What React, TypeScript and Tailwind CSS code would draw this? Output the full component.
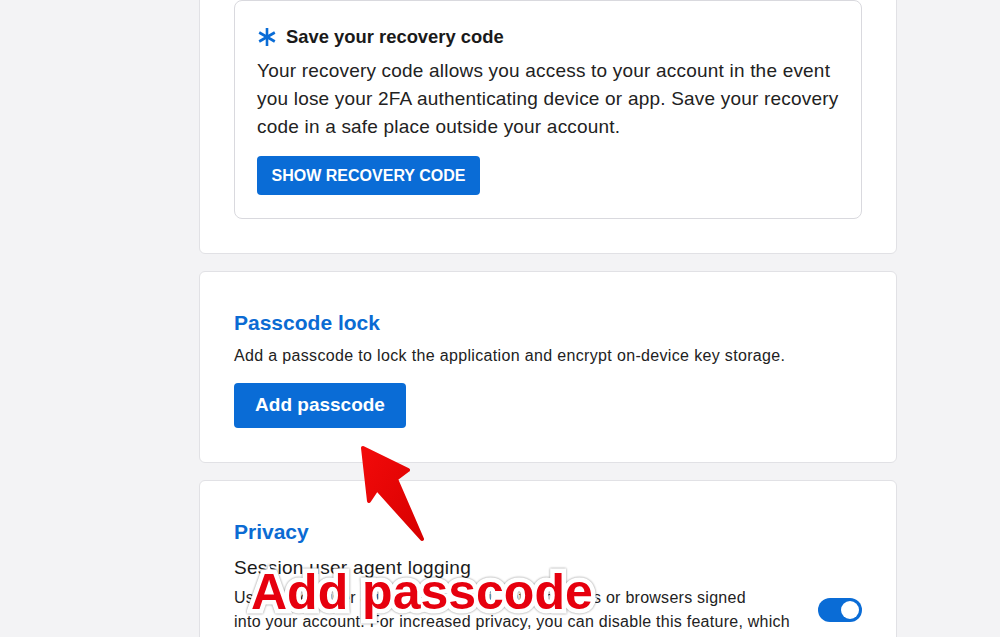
import React from "react";

function AsteriskIcon() {
  return (
    <svg width="20" height="20" viewBox="0 0 20 20" className="shrink-0">
      <g stroke="#0a6cd6" strokeWidth="2.6" strokeLinecap="butt">
        <line x1="10" y1="1" x2="10" y2="19" />
        <line x1="2.2" y1="5.5" x2="17.8" y2="14.5" />
        <line x1="2.2" y1="14.5" x2="17.8" y2="5.5" />
      </g>
    </svg>
  );
}

function Toggle() {
  return (
    <div className="mt-[43px] flex h-[24px] w-[44px] shrink-0 items-center justify-end rounded-full bg-[#0a6cd6] px-[3px]">
      <div className="h-[18px] w-[18px] rounded-full bg-white" />
    </div>
  );
}

export default function App() {
  return (
    <div className="relative h-[637px] w-[1000px] overflow-hidden bg-[#f3f3f5] font-['Segoe_UI','Liberation_Sans',sans-serif] text-[#1c1c1c]">
      <div className="-mt-[35px] ml-[199px] flex w-[698px] flex-col gap-[17px]">
        <section className="rounded-[6px] border border-[#e1e1e5] bg-white p-[34px]">
          <div className="rounded-[8px] border border-[#d9d9de] px-[22px] pb-[23px] pt-[22px]">
            <div className="flex h-[28px] items-center gap-[9px]">
              <AsteriskIcon />
              <h3 className="text-[18.4px] font-bold leading-[28px] text-[#1a1a1a]">
                Save your recovery code
              </h3>
            </div>
            <p className="mt-[6px] whitespace-nowrap text-[19px] leading-[28px] tracking-[0.2px] text-[#222]">
              Your recovery code allows you access to your account in the event
              <br />
              you lose your 2FA authenticating device or app. Save your recovery
              <br />
              code in a safe place outside your account.
            </p>
            <button className="mt-[15px] flex h-[39px] w-[223px] items-center justify-center rounded-[4px] bg-[#0a6cd6] text-[16px] font-bold text-white">
              SHOW RECOVERY CODE
            </button>
          </div>
        </section>

        <section className="rounded-[6px] border border-[#e1e1e5] bg-white p-[34px]">
          <h2 className="text-[21px] font-bold leading-[34px] text-[#0b6bd3]">Passcode lock</h2>
          <p className="mt-[5px] whitespace-nowrap text-[16px] leading-[22px] tracking-[0.34px] text-[#222]">
            Add a passcode to lock the application and encrypt on-device key storage.
          </p>
          <button className="mt-[16px] flex h-[45px] w-[172px] items-center justify-center rounded-[4px] bg-[#0a6cd6] text-[19px] font-bold text-white">
            Add passcode
          </button>
        </section>

        <section className="rounded-[6px] border border-[#e1e1e5] bg-white p-[34px]">
          <h2 className="text-[21px] font-bold leading-[34px] text-[#0b6bd3]">Privacy</h2>
          <div className="mt-[6px] flex items-start gap-[27px]">
            <div className="flex-1">
              <h4 className="text-[19px] leading-[26px] tracking-[0.3px] text-[#1a1a1a]">
                Session user agent logging
              </h4>
              <p className="mt-[5px] whitespace-nowrap text-[16px] leading-[24px] tracking-[0.26px] text-[#222]">
                Use of their user agent data helps identify devices or browsers signed
                <br />
                into your account. For increased privacy, you can disable this feature, which
                <br />
                may make it harder to recognize unfamiliar sessions.
              </p>
            </div>
            <Toggle />
          </div>
        </section>
      </div>

      <svg
        className="pointer-events-none absolute left-0 top-0"
        width="1000"
        height="637"
        viewBox="0 0 1000 637"
      >
        <defs>
          <linearGradient id="arrowGrad" x1="0" y1="0" x2="1" y2="1">
            <stop offset="0" stopColor="#f20a0a" />
            <stop offset="1" stopColor="#d80000" />
          </linearGradient>
        </defs>
        <path
          d="M363 448 L408 470 L396 479 L422 539 L377 489 L369 501 Z"
          fill="url(#arrowGrad)"
          stroke="url(#arrowGrad)"
          strokeWidth="4"
          strokeLinejoin="round"
        />
      </svg>

      <div className="pointer-events-none absolute left-[251px] top-[567px] whitespace-nowrap font-['Liberation_Sans',sans-serif] text-[50px] font-bold leading-none text-[#e6000e] [-webkit-text-stroke:9px_white] [paint-order:stroke_fill] [filter:drop-shadow(0_0_1px_rgba(0,0,0,0.45))]">
        Add passcode
      </div>
    </div>
  );
}
